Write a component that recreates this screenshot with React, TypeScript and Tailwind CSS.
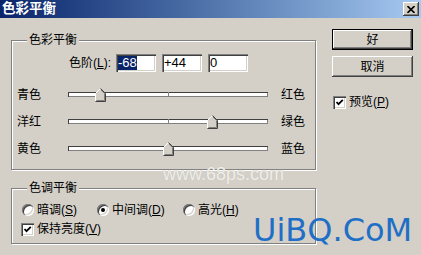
import React from 'react';

const font = "font-['Liberation_Sans','Noto_Sans_CJK_SC',sans-serif]";
const raised =
  'shadow-[inset_-1px_-1px_0_#404040,inset_1px_1px_0_#fff,inset_-2px_-2px_0_#808080,inset_2px_2px_0_#d4d0c8]';
const sunken =
  'shadow-[inset_1px_1px_0_#808080,inset_2px_2px_0_#404040,inset_-1px_-1px_0_#fff,inset_-2px_-2px_0_#d4d0c8]';

function GroupBox({ label, className, children }: { label: string; className: string; children: React.ReactNode }) {
  return (
    <div className={`relative border border-[#808080] shadow-[inset_1px_1px_0_#fff,1px_1px_0_#fff] ${className}`}>
      <span className="absolute left-[15px] top-[-8px] bg-[#d4d0c8] px-[2px] text-[12px] leading-[14px]">{label}</span>
      {children}
    </div>
  );
}

function Slider({ value }: { value: number }) {
  return (
    <div className="relative flex h-[14px] w-[200px] items-center">
      <div className="relative h-[5px] w-full bg-white shadow-[inset_1px_1px_0_#404040,inset_-1px_-1px_0_#808080]">
        <div className="absolute left-[100px] top-0 h-full w-px bg-[#808080]" />
      </div>
      <svg className="absolute top-0" style={{ left: 100 + value - 5.5 }} width="11" height="14" viewBox="0 0 11 14">
        <polygon points="0.5,5.5 5.5,0.5 10.5,5.5 10.5,13.5 0.5,13.5" fill="#d4d0c8" />
        <polyline points="0.5,13 0.5,5.5 5.5,0.5" stroke="#fff" fill="none" />
        <polyline points="5.5,0.5 10.5,5.5 10.5,13.5 0.5,13.5" stroke="#404040" fill="none" />
        <polyline points="6,2 9.5,5.5 9.5,12.5 1.5,12.5" stroke="#808080" fill="none" />
      </svg>
    </div>
  );
}

function Checkbox() {
  return (
    <div className={`flex h-[13px] w-[13px] shrink-0 items-center justify-center bg-white ${sunken}`}>
      <svg width="9" height="9" viewBox="0 0 9 9">
        <path d="M1.5 4 L3.5 6.2 L7.8 1.8" stroke="#000" strokeWidth="1.8" fill="none" />
      </svg>
    </div>
  );
}

function Radio({ checked }: { checked?: boolean }) {
  return (
    <div className={`flex h-[12px] w-[12px] shrink-0 items-center justify-center rounded-full bg-white ${sunken}`}>
      {checked && <div className="h-[4px] w-[4px] rounded-full bg-black" />}
    </div>
  );
}

function Field({ children }: { children: React.ReactNode }) {
  return (
    <div className={`flex h-[18px] w-[40px] items-center bg-white px-[2px] font-['Liberation_Sans',sans-serif] text-[13px] leading-[14px] ${sunken}`}>
      {children}
    </div>
  );
}

const rows = [
  { left: '青色', right: '红色', value: -68 },
  { left: '洋红', right: '绿色', value: 44 },
  { left: '黄色', right: '蓝色', value: 0 },
];

export default function App() {
  return (
    <div className={`relative flex h-[255px] w-[421px] flex-col overflow-hidden bg-[#d4d0c8] text-[12px] leading-[14px] text-black ${font}`}>
      <div className="flex h-[18px] shrink-0 items-center justify-between bg-linear-to-r from-[#0a246a] to-[#a6caf0] pl-[2px] pr-[2px]">
        <span className="text-[13.5px] font-bold leading-[16px] text-white">色彩平衡</span>
        <div className={`flex h-[14px] w-[16px] items-center justify-center bg-[#d4d0c8] ${raised}`}>
          <svg width="8" height="7" viewBox="0 0 8 7">
            <path d="M0.5 0 L7.5 7 M7.5 0 L0.5 7" stroke="#000" strokeWidth="1.6" />
          </svg>
        </div>
      </div>

      <div className="flex">
        <div className="w-[316px] pl-[11px]">
          <GroupBox label="色彩平衡" className="mt-[22px] h-[130px] w-[305px]">
            <div className="mt-[13px] flex items-center">
              <span className="w-[99px] text-right">
                色阶(<span className="underline">L</span>):
              </span>
              <div className="ml-[5px] flex gap-[6px]">
                <Field>
                  <span className="bg-[#0a246a] text-white">-68</span>
                </Field>
                <Field>+44</Field>
                <Field>0</Field>
              </div>
            </div>
            <div className="mt-[9px] flex flex-col">
              {rows.map((r) => (
                <div key={r.left} className="flex h-[27px] items-center pl-[5px]">
                  <span className="w-[51px]">{r.left}</span>
                  <Slider value={r.value} />
                  <span className="ml-[13px]">{r.right}</span>
                </div>
              ))}
            </div>
          </GroupBox>

          <GroupBox label="色调平衡" className="mt-[18px] h-[56px] w-[305px]">
            <div className="mt-[14px] flex h-[14px] items-center pl-[10px]">
              <div className="flex w-[75px] items-center gap-[3px]">
                <Radio />
                <span>
                  暗调(<span className="underline">S</span>)
                </span>
              </div>
              <div className="flex w-[86px] items-center gap-[3px]">
                <Radio checked />
                <span>
                  中间调(<span className="underline">D</span>)
                </span>
              </div>
              <div className="flex items-center gap-[3px]">
                <Radio />
                <span>
                  高光(<span className="underline">H</span>)
                </span>
              </div>
            </div>
            <div className="mt-[5px] flex h-[14px] items-center gap-[3px] pl-[9px]">
              <Checkbox />
              <span>
                保持亮度(<span className="underline">V</span>)
              </span>
            </div>
          </GroupBox>
        </div>

        <div className="ml-[16px] mt-[11px] flex w-[81px] flex-col">
          <div className="h-[21px] w-[81px] border border-black">
            <div className={`flex h-full w-full items-center justify-center ${raised}`}>好</div>
          </div>
          <div className={`mt-[6px] flex h-[21px] w-[81px] items-center justify-center ${raised}`}>取消</div>
          <div className="ml-[1px] mt-[18px] flex items-center gap-[3px]">
            <Checkbox />
            <span>
              预览(<span className="underline">P</span>)
            </span>
          </div>
        </div>
      </div>

      <span className="absolute left-[163px] top-[165px] font-['Liberation_Sans',sans-serif] text-[18px] leading-none text-[#efeeeb] [text-shadow:0_0_1px_#bfbab0]">
        www.68ps.com
      </span>
      <span className="absolute left-[253px] top-[214px] font-['DejaVu_Sans',sans-serif] text-[32px] leading-none text-[#1f6fc6]">
        UiBQ.CoM
      </span>
    </div>
  );
}
